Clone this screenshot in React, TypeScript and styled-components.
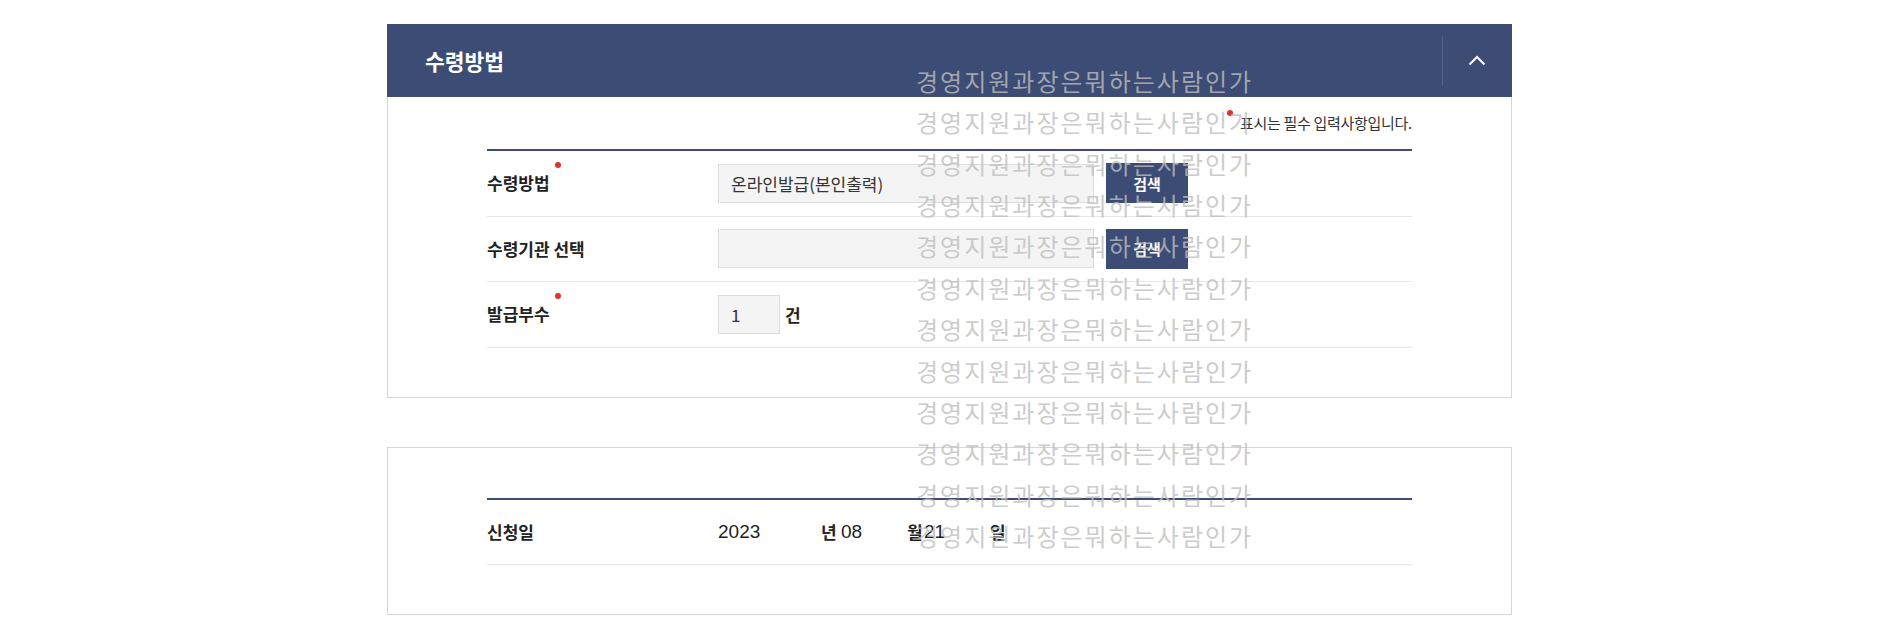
import React from "react";
import styled, { createGlobalStyle } from "styled-components";

const navy = "#3d4c74";
const WATERMARK = "경영지원과장은뭐하는사람인가";

const GlobalStyle = createGlobalStyle`
  * { box-sizing: border-box; }
  body {
    margin: 0;
    background: #fff;
    color: #222;
    font-family: "Noto Sans CJK KR", "Noto Sans", sans-serif;
  }
`;

function Chevron() {
  return (
    <svg width="18" height="11" viewBox="0 0 18 11" fill="none">
      <polyline points="1.5,9.5 9,2 16.5,9.5" stroke="#fff" strokeWidth="2" />
    </svg>
  );
}

export default function App() {
  return (
    <>
      <GlobalStyle />
      <StyledPage>
        <StyledContainer>
          <StyledPanel>
            <StyledPanelHeader>
              <StyledPanelTitle>수령방법</StyledPanelTitle>
              <StyledToggle type="button" aria-label="접기">
                <Chevron />
              </StyledToggle>
            </StyledPanelHeader>
            <StyledPanelBody>
              <StyledNotice>
                <StyledNoticeText>표시는 필수 입력사항입니다.</StyledNoticeText>
              </StyledNotice>
              <StyledTable $offset={16}>
                <StyledRow>
                  <StyledLabel $required>수령방법</StyledLabel>
                  <StyledControls>
                    <StyledField $width={376}>온라인발급(본인출력)</StyledField>
                    <StyledButton type="button">검색</StyledButton>
                  </StyledControls>
                </StyledRow>
                <StyledRow>
                  <StyledLabel>수령기관 선택</StyledLabel>
                  <StyledControls>
                    <StyledField $width={376} />
                    <StyledButton type="button">검색</StyledButton>
                  </StyledControls>
                </StyledRow>
                <StyledRow>
                  <StyledLabel $required>발급부수</StyledLabel>
                  <StyledControls $gap={5}>
                    <StyledField $width={62}>1</StyledField>
                    <StyledUnit>건</StyledUnit>
                  </StyledControls>
                </StyledRow>
              </StyledTable>
            </StyledPanelBody>
          </StyledPanel>

          <StyledPanel>
            <StyledPanelBody $top={50}>
              <StyledTable>
                <StyledRow>
                  <StyledLabel>신청일</StyledLabel>
                  <StyledControls $gap={0}>
                    <StyledDateValue $width={103}>2023</StyledDateValue>
                    <StyledUnit $width={20}>년</StyledUnit>
                    <StyledDateValue $width={66}>08</StyledDateValue>
                    <StyledUnit $width={17}>월</StyledUnit>
                    <StyledDateValue $width={66}>21</StyledDateValue>
                    <StyledUnit>일</StyledUnit>
                  </StyledControls>
                </StyledRow>
              </StyledTable>
            </StyledPanelBody>
          </StyledPanel>

          <StyledWatermark aria-hidden="true">
            {Array.from({ length: 12 }, (_, i) => (
              <div key={i}>{WATERMARK}</div>
            ))}
          </StyledWatermark>
        </StyledContainer>
      </StyledPage>
    </>
  );
}

const StyledPage = styled.div`
  min-height: 642px;
  padding: 24px 0 0 3px;
  display: flex;
  justify-content: center;
`;

const StyledContainer = styled.div`
  position: relative;
  width: 1125px;
`;

const StyledPanel = styled.section`
  border: 1px solid #d6d6d6;
  background: #fff;

  & + & {
    margin-top: 49px;
  }
`;

const StyledPanelHeader = styled.header`
  margin: -1px -1px 0;
  height: 73px;
  display: flex;
  align-items: center;
  justify-content: space-between;
  padding-left: 38px;
  background: ${navy};
`;

const StyledPanelTitle = styled.h2`
  margin: 0;
  color: #fff;
  font-size: 21.5px;
  font-weight: 700;
`;

const StyledToggle = styled.button`
  width: 69px;
  height: 50px;
  margin-right: 1px;
  display: flex;
  align-items: center;
  justify-content: center;
  padding: 0;
  border: none;
  border-left: 1px solid rgba(255, 255, 255, 0.12);
  background: transparent;
  cursor: pointer;
`;

const StyledPanelBody = styled.div<{ $top?: number }>`
  padding: ${(p) => p.$top ?? 0}px 99px 49px;
`;

const StyledNotice = styled.div`
  padding-top: 16px;
  display: flex;
  justify-content: flex-end;
  font-size: 15px;
  line-height: 20px;
  letter-spacing: -0.3px;
  color: #333;
`;

const StyledNoticeText = styled.span`
  position: relative;

  &::before {
    content: "";
    position: absolute;
    left: -13px;
    top: -3px;
    width: 6px;
    height: 6px;
    border-radius: 50%;
    background: #e0332b;
  }
`;

const StyledTable = styled.div<{ $offset?: number }>`
  margin-top: ${(p) => p.$offset ?? 0}px;
  border-top: 2px solid ${navy};
`;

const StyledRow = styled.div`
  height: 65.5px;
  display: grid;
  grid-template-columns: 231px 1fr;
  align-items: center;
  border-bottom: 1px solid #e8e8e8;
`;

const StyledLabel = styled.div<{ $required?: boolean }>`
  justify-self: start;
  position: relative;
  font-size: 17px;
  line-height: 24px;
  font-weight: 700;
  color: #222;

  &::after {
    content: "";
    display: ${(p) => (p.$required ? "block" : "none")};
    position: absolute;
    right: -11px;
    top: -9px;
    width: 6px;
    height: 6px;
    border-radius: 50%;
    background: #e0332b;
  }
`;

const StyledControls = styled.div<{ $gap?: number }>`
  display: flex;
  align-items: center;
  gap: ${(p) => p.$gap ?? 12}px;
`;

const StyledField = styled.div<{ $width: number }>`
  width: ${(p) => p.$width}px;
  height: 39px;
  display: flex;
  align-items: center;
  padding: 0 12px;
  background: #f4f4f4;
  border: 1px solid #dcdcdc;
  font-size: 17px;
  color: #333;
`;

const StyledButton = styled.button`
  width: 82px;
  height: 40px;
  padding: 0;
  border: none;
  background: ${navy};
  color: #fff;
  font-family: inherit;
  font-size: 15px;
  font-weight: 700;
  cursor: pointer;
`;

const StyledUnit = styled.span<{ $width?: number }>`
  width: ${(p) => (p.$width ? `${p.$width}px` : "auto")};
  font-size: 17px;
  font-weight: 700;
  color: #222;
`;

const StyledDateValue = styled.span<{ $width: number }>`
  width: ${(p) => p.$width}px;
  font-family: "Liberation Sans", "Noto Sans CJK KR", sans-serif;
  font-size: 19px;
  color: #222;
`;

const StyledWatermark = styled.div`
  position: absolute;
  left: 529px;
  top: 36px;
  z-index: 10;
  pointer-events: none;
  white-space: nowrap;
  font-size: 24px;
  line-height: 41.36px;
  letter-spacing: 2px;
  color: rgba(190, 190, 190, 0.8);
`;
